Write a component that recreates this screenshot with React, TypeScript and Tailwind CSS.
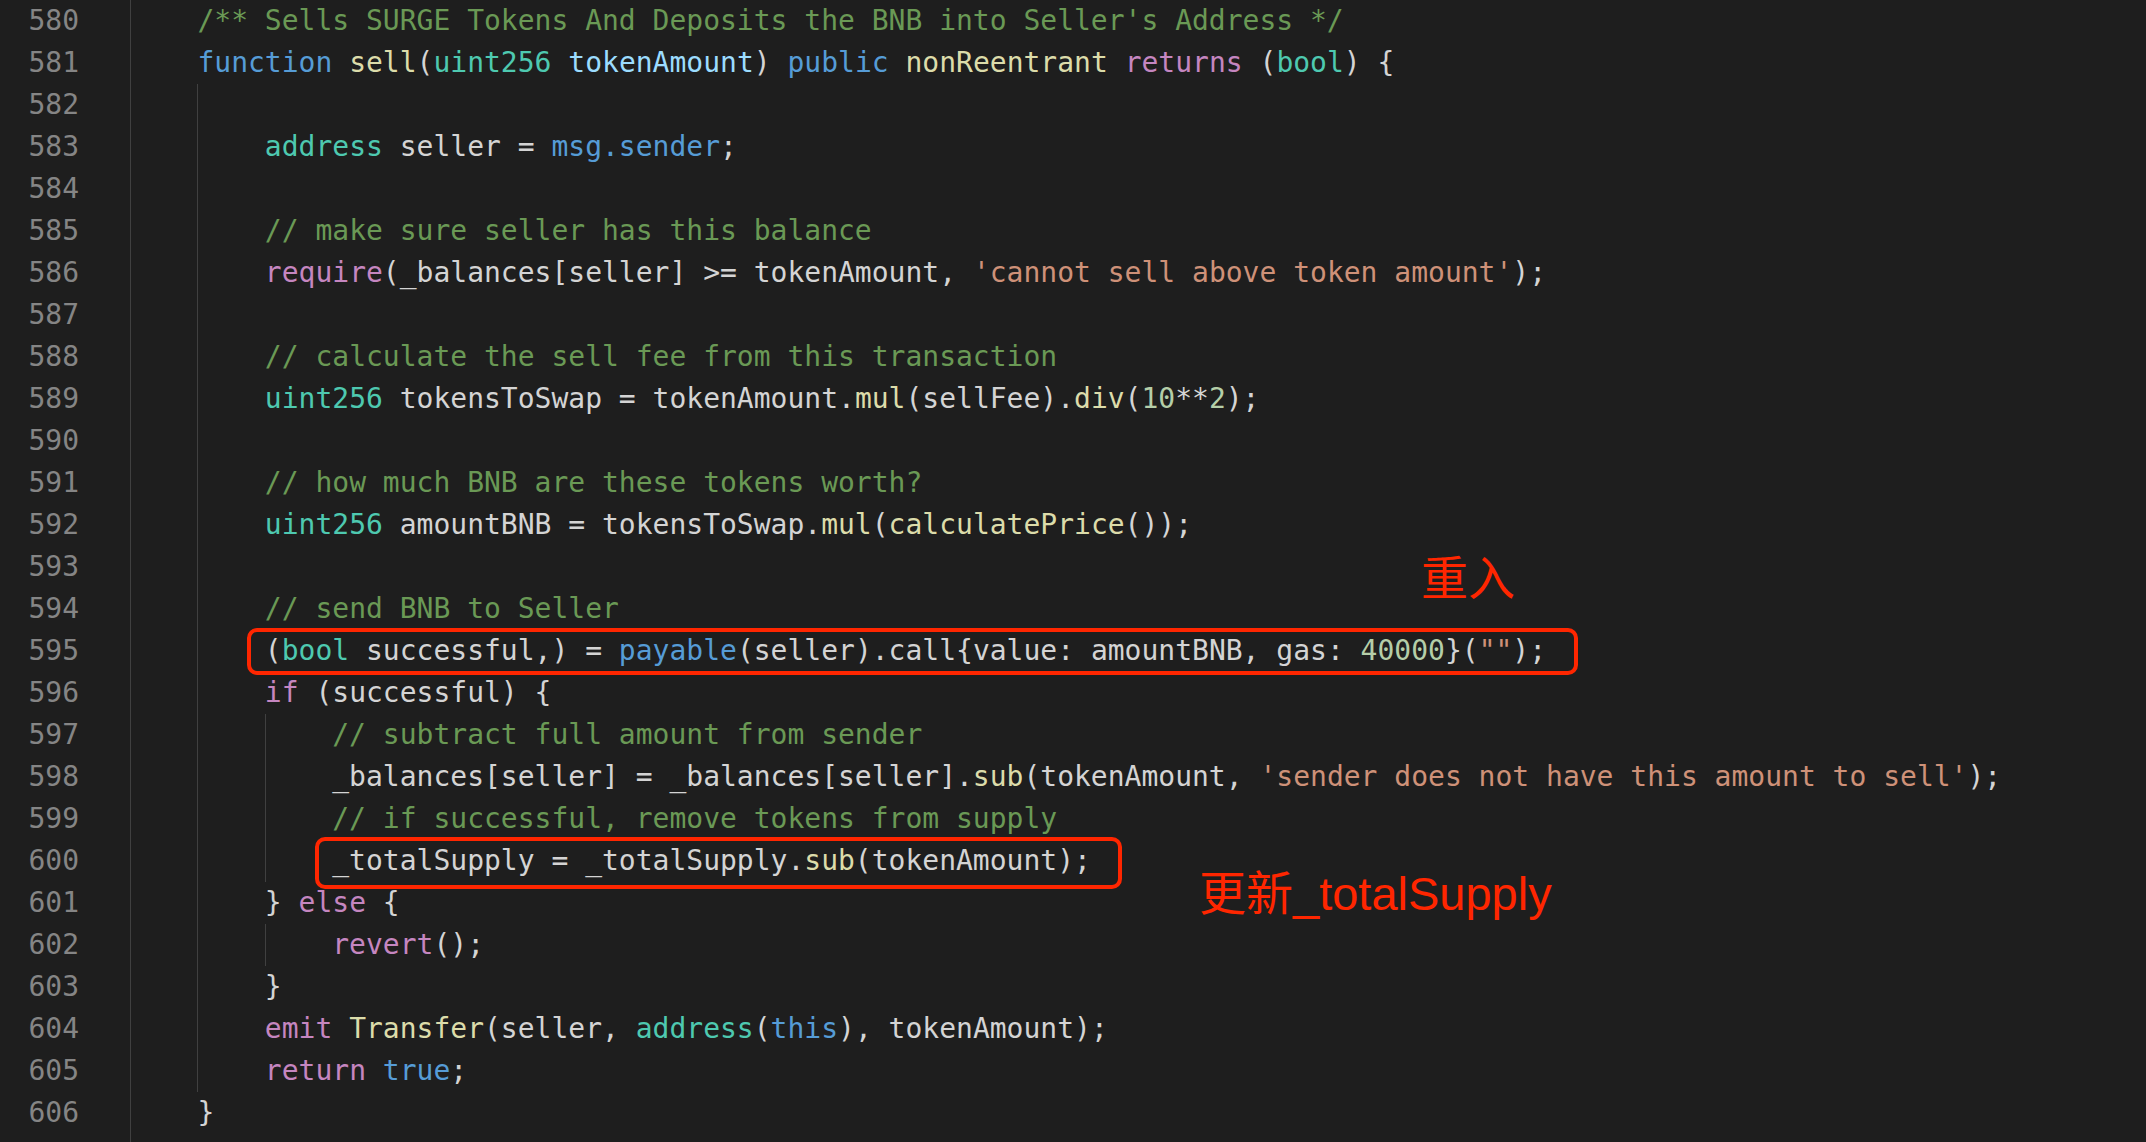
import React from 'react';

type Kind = 'c' | 'k' | 't' | 'f' | 'p' | 'm' | 's' | 'n' | 'x';
type Tok = [Kind, string];
type Line = { no: number; indent: number; toks: Tok[] };

const color: Record<Kind, string> = {
  c: 'text-[#6a9955]',
  k: 'text-[#569cd6]',
  t: 'text-[#4ec9b0]',
  f: 'text-[#dcdcaa]',
  p: 'text-[#9cdcfe]',
  m: 'text-[#c586c0]',
  s: 'text-[#ce9178]',
  n: 'text-[#b5cea8]',
  x: 'text-[#d4d4d4]',
};

const lines: Line[] = [
  { no: 580, indent: 1, toks: [['c', "/** Sells SURGE Tokens And Deposits the BNB into Seller's Address */"]] },
  {
    no: 581,
    indent: 1,
    toks: [
      ['k', 'function'], ['x', ' '], ['f', 'sell'], ['x', '('], ['t', 'uint256'], ['x', ' '], ['p', 'tokenAmount'],
      ['x', ') '], ['k', 'public'], ['x', ' '], ['f', 'nonReentrant'], ['x', ' '], ['m', 'returns'], ['x', ' ('],
      ['t', 'bool'], ['x', ') {'],
    ],
  },
  { no: 582, indent: 2, toks: [] },
  { no: 583, indent: 2, toks: [['t', 'address'], ['x', ' seller = '], ['k', 'msg.sender'], ['x', ';']] },
  { no: 584, indent: 2, toks: [] },
  { no: 585, indent: 2, toks: [['c', '// make sure seller has this balance']] },
  {
    no: 586,
    indent: 2,
    toks: [['m', 'require'], ['x', '(_balances[seller] >= tokenAmount, '], ['s', "'cannot sell above token amount'"], ['x', ');']],
  },
  { no: 587, indent: 2, toks: [] },
  { no: 588, indent: 2, toks: [['c', '// calculate the sell fee from this transaction']] },
  {
    no: 589,
    indent: 2,
    toks: [
      ['t', 'uint256'], ['x', ' tokensToSwap = tokenAmount.'], ['f', 'mul'], ['x', '(sellFee).'], ['f', 'div'],
      ['x', '('], ['n', '10'], ['x', '**'], ['n', '2'], ['x', ');'],
    ],
  },
  { no: 590, indent: 2, toks: [] },
  { no: 591, indent: 2, toks: [['c', '// how much BNB are these tokens worth?']] },
  {
    no: 592,
    indent: 2,
    toks: [['t', 'uint256'], ['x', ' amountBNB = tokensToSwap.'], ['f', 'mul'], ['x', '('], ['f', 'calculatePrice'], ['x', '());']],
  },
  { no: 593, indent: 2, toks: [] },
  { no: 594, indent: 2, toks: [['c', '// send BNB to Seller']] },
  {
    no: 595,
    indent: 2,
    toks: [
      ['x', '('], ['t', 'bool'], ['x', ' successful,) = '], ['k', 'payable'], ['x', '(seller).call{value: amountBNB, gas: '],
      ['n', '40000'], ['x', '}('], ['s', '""'], ['x', ');'],
    ],
  },
  { no: 596, indent: 2, toks: [['m', 'if'], ['x', ' (successful) {']] },
  { no: 597, indent: 3, toks: [['c', '// subtract full amount from sender']] },
  {
    no: 598,
    indent: 3,
    toks: [
      ['x', '_balances[seller] = _balances[seller].'], ['f', 'sub'], ['x', '(tokenAmount, '],
      ['s', "'sender does not have this amount to sell'"], ['x', ');'],
    ],
  },
  { no: 599, indent: 3, toks: [['c', '// if successful, remove tokens from supply']] },
  { no: 600, indent: 3, toks: [['x', '_totalSupply = _totalSupply.'], ['f', 'sub'], ['x', '(tokenAmount);']] },
  { no: 601, indent: 2, toks: [['x', '} '], ['m', 'else'], ['x', ' {']] },
  { no: 602, indent: 3, toks: [['m', 'revert'], ['x', '();']] },
  { no: 603, indent: 2, toks: [['x', '}']] },
  {
    no: 604,
    indent: 2,
    toks: [
      ['m', 'emit'], ['x', ' '], ['f', 'Transfer'], ['x', '(seller, '], ['t', 'address'], ['x', '('], ['k', 'this'],
      ['x', '), tokenAmount);'],
    ],
  },
  { no: 605, indent: 2, toks: [['m', 'return'], ['x', ' '], ['k', 'true'], ['x', ';']] },
  { no: 606, indent: 1, toks: [['x', '}']] },
];

function CodeLine({ line }: { line: Line }) {
  return (
    <div className="flex h-[42px] shrink-0 items-stretch">
      <div className="w-[130px] shrink-0 flex items-center">
        <span className="w-[79px] text-right text-[#858585]">{line.no}</span>
      </div>
      {Array.from({ length: line.indent }).map((_, i) => (
        <span key={i} className="w-[4ch] shrink-0 border-l border-[#404040]" />
      ))}
      <span className="whitespace-pre flex items-center">
        {line.toks.map(([k, text], i) => (
          <span key={i} className={color[k]}>
            {text}
          </span>
        ))}
      </span>
    </div>
  );
}

export default function App() {
  return (
    <div
      className="relative w-[2146px] h-[1142px] overflow-hidden bg-[#1e1e1e] text-[28px] leading-[42px] flex flex-col"
      style={{ fontFamily: '"DejaVu Sans Mono", monospace' }}
    >
      {lines.map((l) => (
        <CodeLine key={l.no} line={l} />
      ))}
      <div className="flex flex-1">
        <div className="w-[130px] shrink-0" />
        <span className="w-[4ch] border-l border-[#404040]" />
      </div>

      {/* annotations */}
      <div className="absolute left-[247px] top-[628px] w-[1331px] h-[47px] rounded-[10px] border-[4px] border-[#ff2600]" />
      <div className="absolute left-[315px] top-[837px] w-[807px] h-[52px] rounded-[10px] border-[4px] border-[#ff2600]" />
      <div
        className="absolute left-[1421px] top-[555px] text-[47px] leading-none text-[#ff2600] whitespace-nowrap"
        style={{ fontFamily: '"Liberation Sans", "Noto Sans CJK SC", sans-serif' }}
      >
        重入
      </div>
      <div
        className="absolute left-[1199px] top-[870px] text-[47px] leading-none text-[#ff2600] whitespace-nowrap"
        style={{ fontFamily: '"Liberation Sans", "Noto Sans CJK SC", sans-serif' }}
      >
        更新_totalSupply
      </div>
    </div>
  );
}
